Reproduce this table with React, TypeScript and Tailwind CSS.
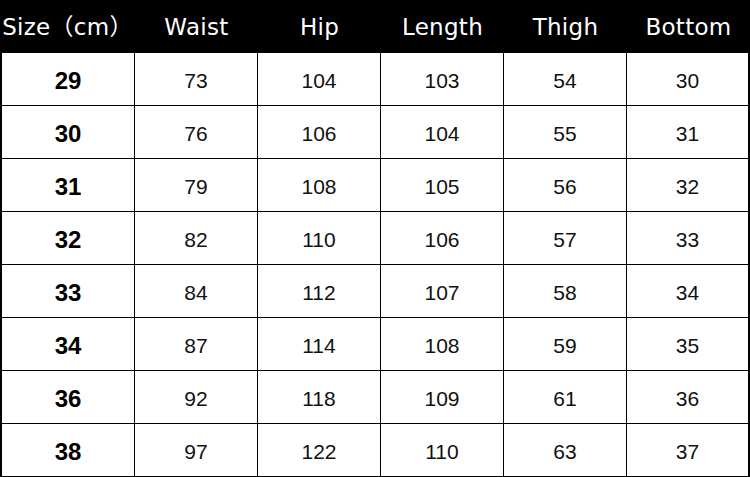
const headers = ["Size（cm）", "Waist", "Hip", "Length", "Thigh", "Bottom"]

const rows = [
  ["29", "73", "104", "103", "54", "30"],
  ["30", "76", "106", "104", "55", "31"],
  ["31", "79", "108", "105", "56", "32"],
  ["32", "82", "110", "106", "57", "33"],
  ["33", "84", "112", "107", "58", "34"],
  ["34", "87", "114", "108", "59", "35"],
  ["36", "92", "118", "109", "61", "36"],
  ["38", "97", "122", "110", "63", "37"],
]

const App = () => {
  return (
    <div className="w-[750px] h-[477px] bg-white overflow-hidden">
      <div
        className="grid grid-cols-[135px_repeat(5,123px)] h-[53px] bg-black text-white text-[23px]"
        style={{ fontFamily: '"DejaVu Sans", "Noto Sans CJK SC", sans-serif' }}
      >
        {headers.map((h) => (
          <div key={h} className="flex items-center justify-center pt-[1px] tracking-[0.3px] whitespace-nowrap">
            {h}
          </div>
        ))}
      </div>

      <div
        className="border-l-2 border-black"
        style={{ fontFamily: '"Liberation Sans", Arial, sans-serif' }}
      >
        {rows.map((r) => (
          <div key={r[0]} className="grid grid-cols-[133px_repeat(5,123px)] h-[53px]">
            {r.map((v, i) => (
              <div
                key={i}
                className={
                  i === 0
                    ? "flex items-center justify-center border-r border-b border-black text-[24px] font-bold text-black pt-[3px]"
                    : i === 5
                    ? "flex items-center justify-center border-r-2 border-b border-black text-[21px] text-[#111] pt-[4px]"
                    : "flex items-center justify-center border-r border-b border-black text-[21px] text-[#111] pt-[4px]"
                }
              >
                {v}
              </div>
            ))}
          </div>
        ))}
      </div>
    </div>
  )
}

export default App
